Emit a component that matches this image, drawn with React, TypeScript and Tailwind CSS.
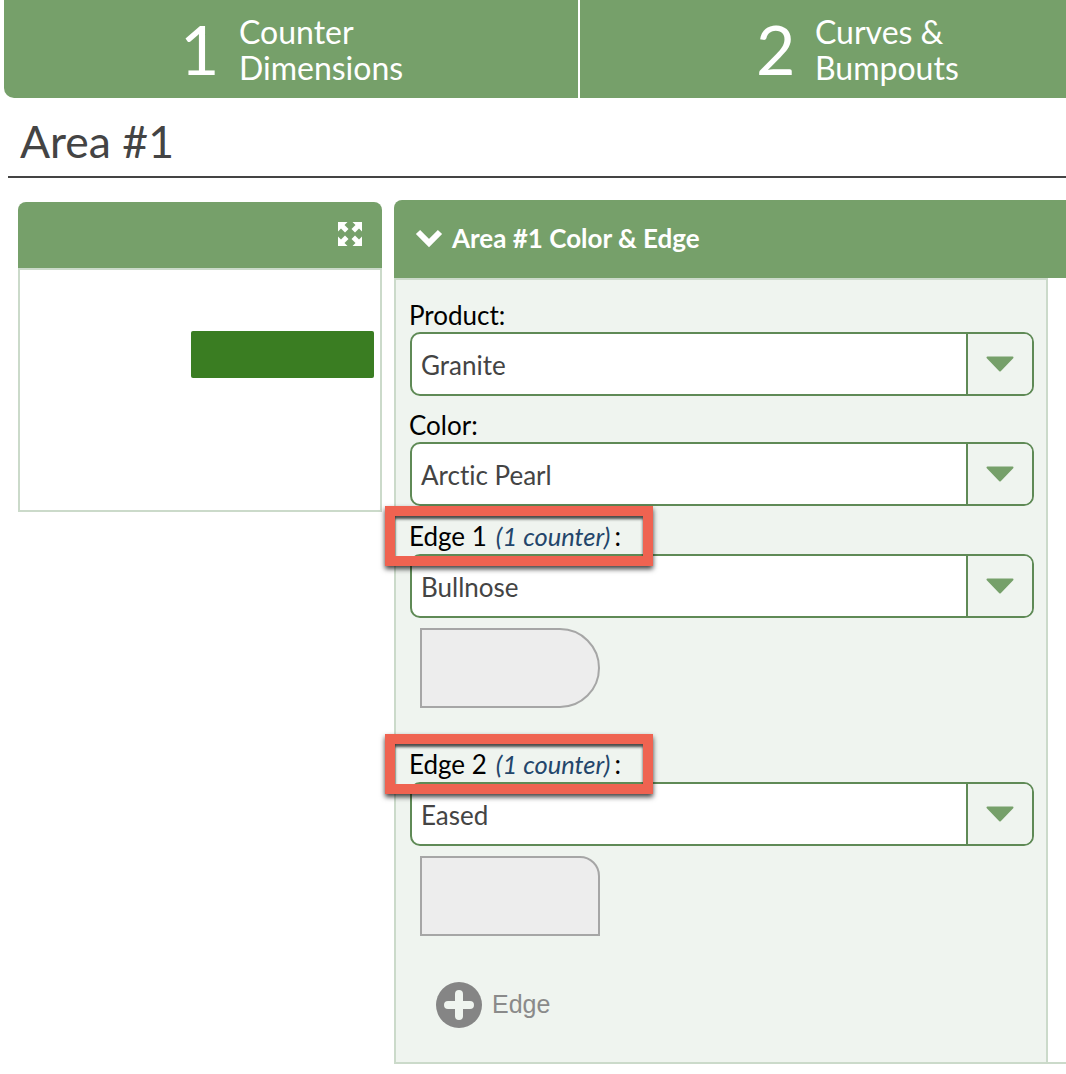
const edges = [
    { label: "Edge 1", value: "Bullnose", shape: "bullnose" },
    { label: "Edge 2", value: "Eased", shape: "eased" },
];

function Select({ value }: { value: string }) {
    return (
        <div className="flex h-[64px] overflow-hidden rounded-[10px] border-2 border-[#5f8a56] bg-white">
            <div className="flex-1 pl-[9px] text-[26px] leading-[62px] text-[#444]">{value}</div>
            <div className="flex w-[66px] items-center justify-center border-l-2 border-[#5f8a56] bg-[#eff4ef]">
                <svg width="28" height="16" viewBox="0 0 28 16">
                    <path d="M1.5 1.5H26.5L14 14.5Z" fill="#76a06a" stroke="#76a06a" strokeWidth="2" strokeLinejoin="round" />
                </svg>
            </div>
        </div>
    );
}

function ExpandIcon() {
    return (
        <svg width="24" height="24" viewBox="0 0 24 24" fill="white">
            <path d="M0 0H9.5L6.5 3L10.5 7L7 10.5L3 6.5L0 9.5Z" />
            <path d="M24 0H14.5L17.5 3L13.5 7L17 10.5L21 6.5L24 9.5Z" />
            <path d="M0 24H9.5L6.5 21L10.5 17L7 13.5L3 17.5L0 14.5Z" />
            <path d="M24 24H14.5L17.5 21L13.5 17L17 13.5L21 17.5L24 14.5Z" />
        </svg>
    );
}

function EdgeShape({ shape }: { shape: string }) {
    const corner = shape === "bullnose" ? "rounded-r-[40px]" : "rounded-tr-[20px]";
    return <div className={`ml-[10px] mt-[10px] h-[80px] w-[180px] border-2 border-[#a6a6a6] bg-[#ededed] ${corner}`} />;
}

function StepTab({ num, lines, className }: { num: string; lines: string[]; className: string }) {
    return (
        <div className={`flex items-center bg-[#76a06a] text-white ${className}`}>
            <span className="w-[59px] text-[68px] leading-none">{num}</span>
            <div className="pt-[2px] text-[32px] leading-[36px]">
                {lines.map((line) => (
                    <div key={line}>{line}</div>
                ))}
            </div>
        </div>
    );
}

export default function App() {
    return (
        <div className="h-[1074px] w-[1066px] overflow-hidden bg-white font-['Lato',sans-serif] [font-variant-ligatures:none]">
            <div className="ml-[4px] flex h-[98px] gap-[2px] overflow-hidden rounded-bl-[10px]">
                <StepTab num="1" lines={["Counter", "Dimensions"]} className="w-[574px] pl-[176px]" />
                <StepTab num="2" lines={["Curves &", "Bumpouts"]} className="flex-1 pl-[176px]" />
            </div>

            <div className="ml-[8px] h-[80px] border-b-2 border-[#444] pl-[12px] pt-[15px] text-[44.5px] leading-[56px] text-[#444]">
                Area #1
            </div>

            <div className="flex items-start gap-[12px] pl-[18px] pt-[22px]">
                <div className="mt-[2px] w-[364px]">
                    <div className="flex h-[66px] justify-end rounded-t-[8px] bg-[#76a06a] pr-[20px] pt-[20px]">
                        <ExpandIcon />
                    </div>
                    <div className="h-[244px] border-2 border-[#cbdaca] bg-white pl-[171px] pt-[61px]">
                        <div className="h-[47px] w-[183px] rounded-[2px] bg-[#3a7d22] blur-[0.7px]" />
                    </div>
                </div>

                <div className="w-[672px]">
                    <div className="flex h-[78px] items-center gap-[9px] rounded-tl-[8px] bg-[#76a06a] pb-[2px] pl-[21px] text-[26px] font-bold text-white">
                        <svg width="28" height="20" viewBox="0 0 28 20">
                            <path d="M3 4L14 15L25 4" fill="none" stroke="white" strokeWidth="6" />
                        </svg>
                        <span>Area #1 Color &amp; Edge</span>
                    </div>
                    <div className="border-b-2 border-[#cbdaca]">
                        <div className="h-[784px] w-[654px] border-x-2 border-t-2 border-[#cbdaca] bg-[#eff4ef] pl-[14px] pr-[12px] pt-[20px] text-[26px] text-black">
                            <div className="-ml-[1px] h-[32px] leading-[30px]">Product:</div>
                            <Select value="Granite" />
                            <div className="-ml-[1px] mt-[14px] h-[32px] leading-[30px]">Color:</div>
                            <Select value="Arctic Pearl" />

                            {edges.map((edge, i) => (
                                <div key={edge.label} className={i === 0 ? "" : "mt-[26px]"}>
                                    <div className="relative h-[48px] pt-[16px] leading-[28px]">
                                        <span className="-ml-[1px]">{edge.label}</span>
                                        <span className="ml-[9px] text-[25.5px] italic text-[#23466b]">(1 counter)</span>
                                        <span className="ml-[4px]">:</span>
                                        <div className="absolute left-[-25px] top-0 h-[60px] w-[268px] border-[10px] border-[#ef6351] shadow-[0_3px_5px_rgba(0,0,0,0.75),inset_0_3px_3px_rgba(0,0,0,0.7)]" />
                                    </div>
                                    <Select value={edge.value} />
                                    <EdgeShape shape={edge.shape} />
                                </div>
                            ))}

                            <div className="ml-[26px] mt-[46px] flex items-center gap-[10px] font-['Liberation_Sans',sans-serif] text-[25px] text-[#8a8a8a]">
                                <svg width="46" height="46" viewBox="0 0 46 46">
                                    <circle cx="23" cy="23" r="23" fill="#858585" />
                                    <path d="M23 12V34M12 23H34" stroke="#eff4ef" strokeWidth="8" strokeLinecap="round" />
                                </svg>
                                <span>Edge</span>
                            </div>
                        </div>
                    </div>
                </div>
            </div>
        </div>
    );
}
